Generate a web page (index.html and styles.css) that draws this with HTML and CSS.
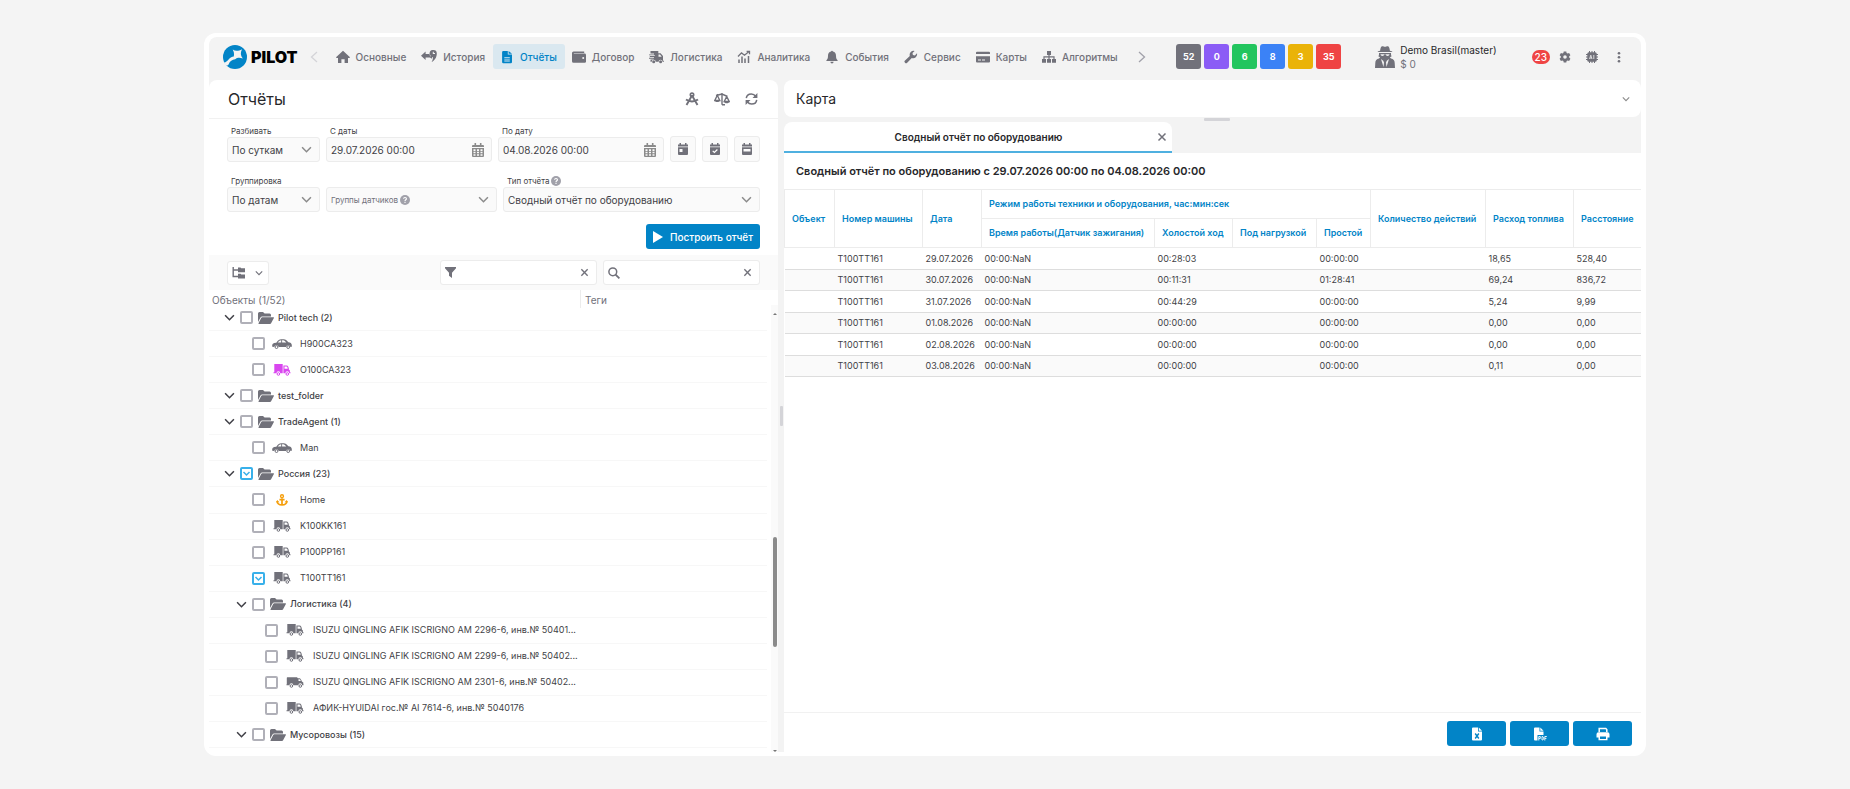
FILE: index.html
```
<!DOCTYPE html>
<html lang="ru">
<head>
<meta charset="utf-8">
<title>Отчёты</title>
<meta name="viewport" content="width=device-width, initial-scale=1">
<link rel="stylesheet" href="styles.css">
</head>
<body>

<svg class="sprite" aria-hidden="true">
  <symbol id="chev" viewBox="0 0 10 10"><path d="M1 3l4 4 4-4" fill="none" stroke="currentColor" stroke-width="1.4"/></symbol>
  <symbol id="close" viewBox="0 0 10 10"><path d="M1.5 1.5l7 7m0-7l-7 7" fill="none" stroke="currentColor" stroke-width="1.5"/></symbol>
  <symbol id="help" viewBox="0 0 12 12"><circle cx="6" cy="6" r="6" fill="#a1a1aa"/><path d="M4.3 4.6C4.4 2.4 7.8 2.6 7.7 4.6 7.6 5.7 6 5.8 6 7.2M6 8.2v1.3" fill="none" stroke="#fff" stroke-width="1.3"/></symbol>
  <symbol id="cal" viewBox="0 0 12 14"><path fill="currentColor" fill-rule="evenodd" d="M2.5 0h1.6v2h3.8V0h1.6v2H11a1 1 0 011 1v1H0V3a1 1 0 011-1h1.5zM0 5h12v8a1 1 0 01-1 1H1a1 1 0 01-1-1zM1.5 6.3v1.6h2V6.3zm3.5 0v1.6h2V6.3zm3.5 0v1.6h2V6.3zM1.5 8.8v1.5h2V8.8zm3.5 0v1.5h2V8.8zm3.5 0v1.5h2V8.8zM1.5 11.2v1.5h2v-1.5zm3.5 0v1.5h2v-1.5zm3.5 0v1.5h2v-1.5z"/></symbol>
  <symbol id="folder" viewBox="0 0 16 12"><path fill="currentColor" d="M0 10.5V1.5A1.5 1.5 0 011.5 0H5l1.600 1.600h5A1.500 1.500 0 0113 3.100v1.300H4.300a2 2 0 00-1.800 1L0 10zM4.300 5.300h11.200c.4 0 .6.400.4.700l-2.800 5.300a1.300 1.300 0 01-1.200.7H.9c-.4 0-.6-.4-.4-.7L3.200 6a1.300 1.300 0 011.100-.7z"/></symbol>
  <symbol id="car" viewBox="0 0 20 10"><path fill="currentColor" fill-rule="evenodd" d="M.3 7.700c-.4-1.800.2-3.100 1.800-3.600l2.200-.4C6.200 1.300 7.400.3 9.200.3h2.600c1.700 0 2.900 1 4.600 3 2 .2 3.300 1 3.400 2.800v1.600l-1.300.3a2.300 2.300 0 00-4.500 0H6.700a2.300 2.300 0 00-4.500 0zM5.700 3.600h3.500V1.200c-1.700 0-2.500.9-3.500 2.400zm4.400-2.400v2.400h4.200c-1-1.500-1.800-2.400-3.200-2.400z"/><circle cx="4.500" cy="8.100" r="1.400" fill="none" stroke="currentColor"/><circle cx="16.200" cy="8.100" r="1.400" fill="none" stroke="currentColor"/></symbol>
  <symbol id="truck" viewBox="0 0 17 12"><path fill="currentColor" fill-rule="evenodd" d="M.8 0h8.400v9.200H6.800a1.900 1.900 0 00-3.800 0H0v-.9h.8zM9.900 1.500h3.200c1.400 0 2.300 1.800 2.300 4.100l1 .9v1.800h.6v.9h-1.300a1.900 1.900 0 00-3.800 0h-2zm1.100 1v2.200h3.200c-.1-1.300-.6-2.200-1.400-2.200z"/><circle cx="4.900" cy="10" r="1.300" fill="none" stroke="currentColor"/><circle cx="13.800" cy="10" r="1.300" fill="none" stroke="currentColor"/></symbol>
  <symbol id="van" viewBox="0 0 17 12"><path fill="currentColor" fill-rule="evenodd" d="M.8 1.200h9c.8 0 1.200.4 1.500 1h1.800c1.300.6 1.900 2 2.300 3.400l1.400.8v1.900h.2v.9h-1.300a1.900 1.900 0 00-3.800 0H6.800a1.900 1.900 0 00-3.800 0H0v-.9h.3V2c0-.4.200-.8.500-.8zM12 3.200v1.900h2.400c-.4-1-.8-1.900-1.400-1.900z"/><circle cx="4.900" cy="10" r="1.300" fill="none" stroke="currentColor"/><circle cx="13.800" cy="10" r="1.300" fill="none" stroke="currentColor"/></symbol>
  <symbol id="anchor" viewBox="0 0 14 14"><path d="M7 5v7.500M4 6.500h6M1.300 8.500c.3 3 2.700 4.300 5.700 4.300s5.400-1.300 5.700-4.300" fill="none" stroke="currentColor" stroke-width="2"/><circle cx="7" cy="2.600" r="1.700" fill="none" stroke="currentColor" stroke-width="1.600"/><path fill="currentColor" d="M0 9.500L1.500 7 4 9.500zm10 0L12.500 7 14 9.500z"/></symbol>
</svg>

<div class="app">
  <header class="topbar">
    <a class="logo" href="#">
      <svg width="24" height="24" viewBox="0 0 24 24"><circle cx="12" cy="12" r="12" fill="#0284c7"/><path fill="#f3f3f3" d="M9.700 4.500c2.600 1.700 5.700 1.700 9.300-.3-1.700 3.600-1.600 6.200.8 9.200-3.300-1-5.500-.9-7.600.8-3 .2-5.300 2-6.400 4.700-.6 1.300-1.600 2-3 1.500L.6 17.800C3.300 17.300 4.600 15.600 6 14c1.400-1.700 3.300-2.700 4.800-2.600.6-2.400.1-4.700-1.100-6.900z"/></svg>
      <span>PILOT</span>
    </a>
    <button class="arrow arrow-off" aria-label="Назад"><svg width="8" height="12" viewBox="0 0 8 12"><path d="M7 1L1.500 6 7 11" fill="none" stroke="currentColor" stroke-width="1.300"/></svg></button>
    <nav class="menu">
      <a href="#"><svg width="14" height="14" viewBox="0 0 14 14"><path fill="currentColor" d="M7 .8l7 6.400-.6.800H12v5H8.600V9.200H5.400V13H2V8H.6L0 7.200z"/></svg>Основные</a>
      <a href="#"><svg width="16" height="14" viewBox="0 0 16 14"><path fill="currentColor" fill-rule="evenodd" d="M0 5.800L4.600 1.600v2.500h4.200c.3 1.600 1.300 2.800 2.600 3.200l-.7 1.500c-.6-1-1.800-1.300-3-1.300H4.600V10zM12.300 0a3.500 3.500 0 013.500 3.600c0 4-2.400 7.400-5.200 8.400 1-1.500 1.500-3.200 1.300-4.900A3.500 3.500 0 0112.300 0zm-.5 1.800v2.100h2.200v-1h-1.200V1.800z"/></svg>История</a>
      <a class="active" href="#"><svg width="14" height="14" viewBox="0 0 14 14"><path fill="currentColor" fill-rule="evenodd" d="M3.300 1h4.500v3.500H12V12a1.200 1.200 0 01-1.200 1.200H3.300A1.200 1.200 0 012.100 12V2.200A1.200 1.200 0 013.300 1zm5.300 0L12 3.800H8.600zM4.300 7v.8h5.500V7zm0 1.800v.8h5.500v-.8zm0 1.800v.8h5.500v-.8z"/></svg>Отчёты</a>
      <a href="#"><svg width="14" height="14" viewBox="0 0 14 14"><path fill="currentColor" fill-rule="evenodd" d="M1.500 1.500h10.700v1.400H1.800v.7h10.800A1.400 1.400 0 0114 5v6.300a1.300 1.300 0 01-1.300 1.400H1.500A1.500 1.500 0 010 11.200V3a1.500 1.500 0 011.500-1.500zm9.700 5.600a1 1 0 100 2 1 1 0 000-2z"/></svg>Договор</a>
      <a href="#"><svg width="15" height="14" viewBox="0 0 15 14"><path fill="currentColor" fill-rule="evenodd" d="M1.500 1h7.800v2.300h2.300L14 6v4.700h1v1h-1.400a2 2 0 00-4 0H6.700a2 2 0 00-4 0H1.500V9.500h3v-.8H0V7.800h5V7H.8v-.9h5v-.8H0v-.9h5v-.8H1.500zm8 3.600v2.100h3.200l-1.700-2.100z"/><circle cx="4.700" cy="11.700" r="1.500" fill="currentColor"/><circle cx="11.600" cy="11.700" r="1.500" fill="currentColor"/></svg>Логистика</a>
      <a href="#"><svg width="14" height="14" viewBox="0 0 14 14"><path fill="none" stroke="currentColor" stroke-width="1.300" d="M1 6.500l3.500-3.600 3 2.300L12 1.500M9.600 1.400h2.900v2.800"/><path stroke="currentColor" stroke-width="1.500" d="M2 13V9.500M5 13V6.500M8 13V8.500M11.500 13V6"/></svg>Аналитика</a>
      <a href="#"><svg width="14" height="14" viewBox="0 0 14 14"><path fill="currentColor" d="M7 .7c.6 0 .9.300.9.900 2.200.5 3.100 2.200 3.100 4.200 0 2.600.7 3.600 1.600 4.400v.9H1.400v-.9C2.300 9.400 3 8.400 3 5.800c0-2 .9-3.700 3.100-4.200 0-.6.3-.9.900-.9zM5.400 11.800h3.200a1.600 1.600 0 01-3.200 0z"/></svg>События</a>
      <a href="#"><svg width="14" height="14" viewBox="0 0 14 14"><path fill="currentColor" d="M13 3.300a4 4 0 01-5.200 4.700l-4.600 4.700a1.500 1.500 0 01-2.200 0 1.500 1.500 0 010-2.200l4.800-4.500A4 4 0 0110.600 1L8.500 3.100l.4 2 2 .4z"/></svg>Сервис</a>
      <a href="#"><svg width="14" height="14" viewBox="0 0 14 14"><path fill="currentColor" fill-rule="evenodd" d="M1 1.700h12a1 1 0 011 1v1.400H0V2.700a1 1 0 011-1zM0 6.200h14v5.300a1 1 0 01-1 1H1a1 1 0 01-1-1zm2 3.400v1h3v-1zm4 0v1h3v-1z"/></svg>Карты</a>
      <a href="#"><svg width="14" height="14" viewBox="0 0 14 14"><path fill="currentColor" d="M5 1h4v4H5zM0 9h4v3.700H0zm5 0h4v3.700H5zm5 0h4v3.700h-4z"/><path d="M7 4v5M2 9V6.900h10V9" fill="none" stroke="currentColor" stroke-width="1.200"/></svg>Алгоритмы</a>
    </nav>
    <button class="arrow" aria-label="Вперёд"><svg width="8" height="12" viewBox="0 0 8 12"><path d="M1 1l5.500 5L1 11" fill="none" stroke="currentColor" stroke-width="1.300"/></svg></button>
    <div class="counters">
      <button class="counter gray">52</button>
      <button class="counter violet">0</button>
      <button class="counter green">6</button>
      <button class="counter blue">8</button>
      <button class="counter yellow">3</button>
      <button class="counter red">35</button>
    </div>
    <div class="user">
      <svg width="20" height="22" viewBox="0 0 20 22"><path fill="currentColor" fill-rule="evenodd" d="M6.500.5c1.500-.8 2 .3 3.500.3s2-1.100 3.500-.3c.8.600 1.200 2.700 1.400 4.300 1.400.3 2.600.7 2.600 1.300H2.500c0-.6 1.200-1 2.600-1.300.2-1.600.6-3.700 1.400-4.300zM4 7h12v1.500l.5 2-1.700.8 1.200 1.200c2.400.6 3.700 2 3.700 4.500L20 22H0l.3-5c0-2.500 1.300-3.900 3.700-4.500l1.200-1.200-1.700-.8.5-2zm1.500 1.200c.2 1.300.8 1.700 1.900 1.700s1.700-.6 1.900-1.300h1.400c.2.700.8 1.300 1.900 1.300s1.700-.4 1.900-1.700zM6 13l2.500 8L9 16.500l-.8-1.700zm8 0l-2.200 1.800-.8 1.700.5 4.500z"/></svg>
      <div>
        <div class="user-name">Demo Brasil(master)</div>
        <div class="user-sum">$ 0</div>
      </div>
    </div>
    <div class="tools">
      <span class="alerts">23</span>
      <button class="icon-btn" aria-label="Настройки"><svg width="12" height="12" viewBox="0 0 12 12"><path fill="currentColor" fill-rule="evenodd" d="M4.700.5h2.600l.3 1.500 1 .6 1.500-.5 1.300 2.200-1.200 1v1.300l1.200 1.100-1.300 2.200-1.500-.5-1 .6-.3 1.500H4.700L4.400 10l-1-.6-1.500.5L.6 7.700l1.200-1.100V5.300l-1.200-1 1.300-2.200 1.500.5 1-.6zM6 4.200a1.800 1.800 0 100 3.600 1.800 1.800 0 000-3.600z"/></svg></button>
      <button class="icon-btn" aria-label="AI"><svg width="12" height="12" viewBox="0 0 12 12"><path stroke="currentColor" stroke-width="1" d="M3.500 0v12M6 0v12M8.500 0v12M0 3.500h12M0 6h12M0 8.500h12"/><rect x="1.300" y="1.300" width="9.400" height="9.400" rx="1.500" fill="currentColor"/><path d="M3.500 8L4.800 4.200 6 8M4 7h1.600M7.800 4v4" stroke="#f3f3f3" stroke-width=".8" fill="none"/></svg></button>
      <button class="icon-btn" aria-label="Меню"><svg width="12" height="12" viewBox="0 0 12 12"><g fill="currentColor"><circle cx="6" cy="2.200" r="1.300"/><circle cx="6" cy="6.200" r="1.300"/><circle cx="6" cy="10.200" r="1.300"/></g></svg></button>
    </div>
  </header>

  <main class="workspace">
    <section class="side">
      <div class="side-head">
        <h1>Отчёты</h1>
        <button class="icon-btn" aria-label="Конструктор"><svg width="14" height="14" viewBox="0 0 14 14"><path fill="none" stroke="currentColor" stroke-width="1.900" d="M7 3.500L1.500 13M7 3.500L12.500 13M1 7.500c3.500 2.600 8.500 2.600 12 0"/><circle cx="7" cy="2.800" r="1.700" fill="none" stroke="currentColor" stroke-width="1.600"/></svg></button>
        <button class="icon-btn" aria-label="Сравнение"><svg width="16" height="14" viewBox="0 0 16 14"><path fill="none" stroke="currentColor" stroke-width="1.400" d="M2 3.500l6-1.500 5.500 2.500M8 1v11.800M8 12.800h3M3.300 3.300L.8 8.500h5zM12.700 4.500l-2.500 5h5z"/><path fill="currentColor" d="M.5 8.300h5.600c-.4 2.400-5.200 2.400-5.600 0zm9.400 1.200h5.600c-.4 2.400-5.200 2.400-5.600 0z"/></svg></button>
        <button class="icon-btn" aria-label="Обновить"><svg width="13" height="14" viewBox="0 0 13 14"><path fill="none" stroke="currentColor" stroke-width="1.500" d="M1.300 6.200C1.600 3.600 3.700 2 6.300 2c1.900 0 3.300.8 4.400 2.300M11.700 7.800c-.3 2.600-2.400 4.200-5 4.200-1.900 0-3.300-.8-4.400-2.300"/><path fill="currentColor" d="M12.400 1v5H7.500zM.6 13V8h4.900z"/></svg></button>
      </div>

      <form class="params" onsubmit="return false;">
        <div class="line">
          <div class="group w-short">
            <label for="split">Разбивать</label>
            <div class="field"><select id="split"><option>По суткам</option></select><svg class="caret"><use href="#chev"/></svg></div>
          </div>
          <div class="group grow">
            <label for="from">С даты</label>
            <div class="field"><input id="from" type="text" value="29.07.2026 00:00"><svg class="cal"><use href="#cal"/></svg></div>
          </div>
          <div class="group grow">
            <label for="to">По дату</label>
            <div class="field"><input id="to" type="text" value="04.08.2026 00:00"><svg class="cal"><use href="#cal"/></svg></div>
          </div>
          <button class="day" aria-label="День"><svg width="10" height="12" viewBox="0 0 10 12"><path fill="currentColor" fill-rule="evenodd" d="M1.500 0H3v1.500h4V0h1.500v1.500H10v2H0v-2h1.500zM0 4.300h10V11a1 1 0 01-1 1H1a1 1 0 01-1-1zM1.500 6v3h3V6z"/></svg></button>
          <button class="day" aria-label="Неделя"><svg width="10" height="12" viewBox="0 0 10 12"><path fill="currentColor" d="M1.500 0H3v1.500h4V0h1.500v1.500H10v2H0v-2h1.500zM0 4.300h10V11a1 1 0 01-1 1H1a1 1 0 01-1-1z"/><path d="M2.700 7.800l1.700 1.700 3-3" fill="none" stroke="#fff" stroke-width="1.200"/></svg></button>
          <button class="day" aria-label="Месяц"><svg width="10" height="12" viewBox="0 0 10 12"><path fill="currentColor" fill-rule="evenodd" d="M1.500 0H3v1.500h4V0h1.500v1.500H10v2H0v-2h1.500zM0 4.300h10V11a1 1 0 01-1 1H1a1 1 0 01-1-1zM1.500 6v2.500h7V6z"/></svg></button>
        </div>
        <div class="line">
          <div class="group w-short">
            <label for="grouping">Группировка</label>
            <div class="field"><select id="grouping"><option>По датам</option></select><svg class="caret"><use href="#chev"/></svg></div>
          </div>
          <div class="group w-sensors">
            <div class="field"><label for="sensors">Группы датчиков</label><svg class="help"><use href="#help"/></svg><select id="sensors"><option></option></select><svg class="caret"><use href="#chev"/></svg></div>
          </div>
          <div class="group grow">
            <label for="type">Тип отчёта <svg class="help"><use href="#help"/></svg></label>
            <div class="field"><select id="type"><option>Сводный отчёт по оборудованию</option></select><svg class="caret"><use href="#chev"/></svg></div>
          </div>
        </div>
        <button class="primary build"><svg width="10" height="12" viewBox="0 0 10 12"><path d="M0 0l10 6-10 6z" fill="currentColor"/></svg>Построить отчёт</button>
      </form>

      <div class="filters">
        <button class="mode" aria-label="Вид дерева"><svg width="13" height="12" viewBox="0 0 13 12"><path d="M1.200 0v9.500H6M1.200 3H6" fill="none" stroke="currentColor" stroke-width="1.400"/><path fill="currentColor" d="M6 .5h2.500l.7.800H13v4H6zM6 6.700h2.500l.7.800H13v4H6z"/></svg><svg class="small"><use href="#chev"/></svg></button>
        <div class="field white"><svg width="11" height="11" viewBox="0 0 11 11"><path d="M0 0h11v1.300L7 5.800V11L4 8.800v-3L0 1.300z" fill="currentColor"/></svg><input type="text" aria-label="Фильтр"><svg class="clear"><use href="#close"/></svg></div>
        <div class="field white"><svg width="12" height="12" viewBox="0 0 12 12"><circle cx="4.800" cy="4.800" r="3.900" fill="none" stroke="currentColor" stroke-width="1.500"/><path d="M7.600 7.600l3.800 3.800" stroke="currentColor" stroke-width="1.800"/></svg><input type="text" aria-label="Поиск"><svg class="clear"><use href="#close"/></svg></div>
      </div>

      <div class="cols"><div>Объекты (1/52)</div><div>Теги</div></div>
      <div class="tree-wrap">
        <ul class="tree">
          <li class="dir l0"><svg class="tw"><use href="#chev"/></svg><input type="checkbox" id="o1"><svg class="fold"><use href="#folder"/></svg><label for="o1">Pilot tech (2)</label></li>
          <li class="l1"><input type="checkbox" id="o2"><svg class="obj"><use href="#car"/></svg><label for="o2">H900CA323</label></li>
          <li class="l1"><input type="checkbox" id="o3"><svg class="obj pink"><use href="#truck"/></svg><label for="o3">O100CA323</label></li>
          <li class="dir l0"><svg class="tw"><use href="#chev"/></svg><input type="checkbox" id="o4"><svg class="fold"><use href="#folder"/></svg><label for="o4">test_folder</label></li>
          <li class="dir l0"><svg class="tw"><use href="#chev"/></svg><input type="checkbox" id="o5"><svg class="fold"><use href="#folder"/></svg><label for="o5">TradeAgent (1)</label></li>
          <li class="l1"><input type="checkbox" id="o6"><svg class="obj"><use href="#car"/></svg><label for="o6">Man</label></li>
          <li class="dir l0"><svg class="tw"><use href="#chev"/></svg><input type="checkbox" id="o7" checked><svg class="fold"><use href="#folder"/></svg><label for="o7">Россия (23)</label></li>
          <li class="l1"><input type="checkbox" id="o8"><svg class="obj orange"><use href="#anchor"/></svg><label for="o8">Home</label></li>
          <li class="l1"><input type="checkbox" id="o9"><svg class="obj"><use href="#truck"/></svg><label for="o9">K100KK161</label></li>
          <li class="l1"><input type="checkbox" id="o10"><svg class="obj"><use href="#truck"/></svg><label for="o10">P100PP161</label></li>
          <li class="l1"><input type="checkbox" id="o11" checked><svg class="obj"><use href="#truck"/></svg><label for="o11">T100TT161</label></li>
          <li class="dir l1"><svg class="tw"><use href="#chev"/></svg><input type="checkbox" id="o12"><svg class="fold"><use href="#folder"/></svg><label for="o12">Логистика (4)</label></li>
          <li class="l2"><input type="checkbox" id="o13"><svg class="obj"><use href="#truck"/></svg><label for="o13">ISUZU QINGLING AFIK ISCRIGNO AM 2296-6, инв.№ 50401...</label></li>
          <li class="l2"><input type="checkbox" id="o14"><svg class="obj"><use href="#truck"/></svg><label for="o14">ISUZU QINGLING AFIK ISCRIGNO AM 2299-6, инв.№ 50402...</label></li>
          <li class="l2"><input type="checkbox" id="o15"><svg class="obj"><use href="#van"/></svg><label for="o15">ISUZU QINGLING AFIK ISCRIGNO AM 2301-6, инв.№ 50402...</label></li>
          <li class="l2"><input type="checkbox" id="o16"><svg class="obj"><use href="#truck"/></svg><label for="o16">АФИК-HYUIDAI гос.№ AI 7614-6, инв.№ 5040176</label></li>
          <li class="dir l1"><svg class="tw"><use href="#chev"/></svg><input type="checkbox" id="o17"><svg class="fold"><use href="#folder"/></svg><label for="o17">Мусоровозы (15)</label></li>
        </ul>
        <div class="scroll"><i class="up"></i><i class="thumb"></i><i class="down"></i></div>
      </div>
    </section>

    <div class="split"><i></i></div>

    <section class="content">
      <div class="map-head"><h2>Карта</h2><svg class="small"><use href="#chev"/></svg></div>
      <div class="tabs">
        <i class="grip"></i>
        <div class="tab"><span>Сводный отчёт по оборудованию</span><button class="icon-btn" aria-label="Закрыть"><svg class="tab-x"><use href="#close"/></svg></button></div>
      </div>
      <div class="report">
        <h3>Сводный отчёт по оборудованию с 29.07.2026 00:00 по 04.08.2026 00:00</h3>
        <table>
          <colgroup><col class="c-obj"><col class="c-num"><col class="c-date"><col class="c-work"><col class="c-idle"><col class="c-load"><col class="c-stop"><col class="c-act"><col class="c-fuel"><col></colgroup>
          <thead>
            <tr>
              <th rowspan="2">Объект</th><th rowspan="2">Номер машины</th><th rowspan="2">Дата</th>
              <th colspan="4">Режим работы техники и оборудования, час:мин:сек</th>
              <th rowspan="2">Количество действий</th><th rowspan="2">Расход топлива</th><th rowspan="2">Расстояние</th>
            </tr>
            <tr><th>Время работы(Датчик зажигания)</th><th>Холостой ход</th><th>Под нагрузкой</th><th>Простой</th></tr>
          </thead>
          <tbody>
            <tr><td></td><td>T100TT161</td><td>29.07.2026</td><td>00:00:NaN</td><td>00:28:03</td><td></td><td>00:00:00</td><td></td><td>18,65</td><td>528,40</td></tr>
            <tr><td></td><td>T100TT161</td><td>30.07.2026</td><td>00:00:NaN</td><td>00:11:31</td><td></td><td>01:28:41</td><td></td><td>69,24</td><td>836,72</td></tr>
            <tr><td></td><td>T100TT161</td><td>31.07.2026</td><td>00:00:NaN</td><td>00:44:29</td><td></td><td>00:00:00</td><td></td><td>5,24</td><td>9,99</td></tr>
            <tr><td></td><td>T100TT161</td><td>01.08.2026</td><td>00:00:NaN</td><td>00:00:00</td><td></td><td>00:00:00</td><td></td><td>0,00</td><td>0,00</td></tr>
            <tr><td></td><td>T100TT161</td><td>02.08.2026</td><td>00:00:NaN</td><td>00:00:00</td><td></td><td>00:00:00</td><td></td><td>0,00</td><td>0,00</td></tr>
            <tr><td></td><td>T100TT161</td><td>03.08.2026</td><td>00:00:NaN</td><td>00:00:00</td><td></td><td>00:00:00</td><td></td><td>0,11</td><td>0,00</td></tr>
          </tbody>
        </table>
      </div>
      <div class="export">
        <button class="primary" aria-label="Excel"><svg width="12" height="14" viewBox="0 0 12 14"><path fill="currentColor" fill-rule="evenodd" d="M2 .5h5V4.500h4V12.500a1 1 0 01-1 1H2a1 1 0 01-1-1v-11a1 1 0 011-1zm5.800 0L11 3.700H7.800z"/><path d="M4.200 6.500l3.600 5m0-5l-3.600 5" stroke="#0284c7" stroke-width="1.400"/></svg></button>
        <button class="primary" aria-label="PDF"><svg width="14" height="14" viewBox="0 0 14 14"><path fill="currentColor" d="M2 .5h4.500V4.500h4V8H4.500v5.500H2a1 1 0 01-1-1v-11a1 1 0 011-1zm5.300 0l3.200 3.200H7.300z"/><path d="M5.800 13.500V9.500h1.500v2H5.800M9 9.500v3.500h.8c.9 0 .9-3.500 0-3.500zM11.800 13.500v-4h2M11.800 11.400h1.600" fill="none" stroke="currentColor" stroke-width=".9"/></svg></button>
        <button class="primary" aria-label="Печать"><svg width="14" height="14" viewBox="0 0 14 14"><path d="M3.200 5V1.500h6.600l1 1V5" fill="none" stroke="currentColor" stroke-width="1.500"/><path fill="currentColor" fill-rule="evenodd" d="M2.500 5.300h9A2 2 0 0113.500 7.300v3.200h-2v2.800h-9v-2.800h-2V7.300a2 2 0 012-2zM4 9.500v2.400h6V9.500z"/></svg></button>
      </div>
    </section>
  </main>
</div>

</body>
</html>
```
FILE: styles.css
```
* {
  box-sizing: border-box;
}
body {
  margin: 0;
  padding: 33px 204px;
  background: #f4f4f4;
  color: #3f3f46;
  font-family: Inter, "Liberation Sans", sans-serif;
  font-size: 10px;
  line-height: 14px;
}
button, input, select {
  font: inherit;
  color: inherit;
}
button {
  cursor: pointer;
}
h1, h2, h3, ul {
  margin: 0;
  padding: 0;
}
svg {
  flex: none;
}
.sprite {
  display: none;
}
.app {
  display: flex;
  flex-direction: column;
  min-height: calc(100vh - 66px);
  padding: 4px 5px;
  background: #fff;
  border-radius: 12px;
}

/* top bar */
.topbar {
  display: flex;
  align-items: center;
  height: 43px;
  padding: 0 16px 4px 14px;
  background: #f3f3f3;
  border-radius: 8px 8px 0 0;
  color: #71717a;
  white-space: nowrap;
}
.logo {
  display: flex;
  align-items: center;
  gap: 4px;
  color: #000;
  font-size: 16px;
  font-weight: 900;
  text-decoration: none;
}
.arrow, .icon-btn {
  display: flex;
  padding: 0;
  border: 0;
  background: none;
  color: #71717a;
}
.arrow {
  color: #a1a1aa;
  margin-left: 12px;
}
.arrow-off {
  color: #d4d4d8;
}
.menu {
  display: flex;
  margin-left: 11px;
}
.menu a {
  display: flex;
  align-items: center;
  gap: 6px;
  height: 25px;
  padding: 0 8px 0 7px;
  border-radius: 3px;
  color: #71717a;
  font-weight: 500;
  text-decoration: none;
}
.menu .active {
  background: #dae8f0;
  color: #0284c7;
}
.counters {
  display: flex;
  gap: 3px;
  margin-left: auto;
}
.counter {
  width: 25px;
  height: 25px;
  padding: 0;
  border: 0;
  border-radius: 3px;
  color: #fff;
  font-size: 9px;
  font-weight: 700;
}
.gray { background: #71717a; }
.violet { background: #8b5cf6; }
.green { background: #22c55e; }
.blue { background: #3b82f6; }
.yellow { background: #eab308; }
.red { background: #ef4444; }
.user {
  display: flex;
  align-items: center;
  gap: 5px;
  margin-left: 34px;
}
.user-name {
  color: #27272a;
}
.tools {
  display: flex;
  align-items: center;
  gap: 15px;
  margin-left: 35px;
}
.alerts {
  margin-right: -6px;
  padding: 0 3px;
  border-radius: 7px;
  background: #ef4444;
  color: #fff;
  font-weight: 500;
}

/* layout */
.workspace {
  display: grid;
  grid-template-columns: 569px 6px minmax(0, 1fr);
  flex: 1;
  background: #f3f3f3;
}
.side {
  display: flex;
  flex-direction: column;
  background: #fff;
  border-radius: 8px 8px 0 0;
}
.side-head {
  display: flex;
  align-items: center;
  gap: 15px;
  height: 39px;
  padding: 0 20px 0 19px;
  border-bottom: 1px solid #f1f1f1;
  color: #71717a;
}
.side-head h1 {
  flex: 1;
  color: #27272a;
  font-size: 16px;
  font-weight: 400;
}

/* report parameters */
.params {
  display: flex;
  flex-direction: column;
  gap: 12px;
  padding: 5px 18px 6px;
}
.line {
  display: flex;
  align-items: flex-end;
  gap: 6px;
}
.group {
  min-width: 0;
}
.group > label {
  display: flex;
  align-items: center;
  gap: 2px;
  height: 13px;
  padding-left: 4px;
  font-size: 8px;
}
.w-short { flex: 0 0 93px; }
.w-sensors { flex: 0 0 171px; }
.grow { flex: 1; }
.field {
  display: flex;
  align-items: center;
  height: 25px;
  padding: 0 7px 0 4px;
  border: 1px solid #ececec;
  border-radius: 3px;
  background: #fafafa;
}
.field label {
  margin-right: 2px;
  color: #71717a;
  font-size: 8px;
}
.field select, .field input {
  flex: 1;
  min-width: 0;
  padding: 0;
  border: 0;
  outline: 0;
  background: none;
  appearance: none;
  color: #3f3f46;
}
.caret {
  width: 11px;
  height: 11px;
  color: #8b8b8b;
}
.cal {
  width: 12px;
  height: 14px;
  color: #8b8b8b;
}
.help {
  width: 10px;
  height: 10px;
}
.day {
  display: flex;
  align-items: center;
  justify-content: center;
  width: 26px;
  height: 26px;
  padding: 0;
  border: 1px solid #ececec;
  border-radius: 3px;
  background: #fafafa;
  color: #71717a;
}
.primary {
  display: flex;
  align-items: center;
  justify-content: center;
  gap: 7px;
  height: 25px;
  border: 0;
  border-radius: 3px;
  background: #0284c7;
  color: #fff;
  font-weight: 500;
}
.build {
  align-self: flex-end;
  padding: 0 7px;
}

/* tree filters */
.filters {
  display: flex;
  align-items: center;
  gap: 6px;
  height: 35px;
  padding: 0 18px;
  background: #fafafa;
  color: #71717a;
}
.mode {
  display: flex;
  align-items: center;
  gap: 10px;
  height: 24px;
  margin-right: auto;
  padding: 0 5px 0 4px;
  border: 1px solid #ececec;
  border-radius: 3px;
  background: #fff;
}
.white {
  width: 157px;
  background: #fff;
}
.small {
  width: 8px;
  height: 8px;
}
.clear {
  width: 9px;
  height: 9px;
}

/* objects tree */
.cols {
  display: flex;
  height: 18px;
  padding-left: 3px;
  color: #71717a;
  line-height: 20px;
}
.cols div:first-child {
  flex: 0 0 368px;
}
.cols div:last-child {
  padding-left: 4px;
  border-left: 1px solid #ececec;
}
.tree-wrap {
  display: flex;
  flex: 1;
  margin-top: -3px;
}
.tree {
  display: flex;
  flex-direction: column;
  flex: 1;
  margin-bottom: 4px;
  font-size: 9px;
  list-style: none;
}
.tree li {
  display: flex;
  align-items: center;
  flex: 1;
  border-bottom: 1px solid #f7f7f7;
}
.l0 { padding-left: 31px; }
.l1 { padding-left: 43px; }
.l2 { padding-left: 56px; }
.tw {
  width: 11px;
  height: 11px;
  margin: 0 5px 0 -16px;
}
.tree input {
  width: 13px;
  height: 13px;
  margin: 0;
  border: 2px solid #b0b0b8;
  border-radius: 2px;
  background: #fff;
  appearance: none;
}
.tree input:checked {
  border-color: #38b0ea;
  background: #fff url("data:image/svg+xml,%3Csvg xmlns='http://www.w3.org/2000/svg' viewBox='0 0 9 9'%3E%3Cpath d='M1.5 3l3 3 3-3' fill='none' stroke='%2338b0ea' stroke-width='1.5'/%3E%3C/svg%3E");
}
.fold {
  width: 16px;
  height: 12px;
  margin: 0 4px 0 5px;
  color: #71717a;
}
.obj {
  width: 20px;
  height: 12px;
  margin: 0 8px 0 7px;
  color: #71717a;
}
.pink { color: #d946ef; }
.orange { color: #f59e0b; }
.dir label {
  font-weight: 500;
}
.scroll {
  display: flex;
  flex-direction: column;
  align-items: center;
  width: 7px;
  margin-left: 4px;
  padding: 8px 0 0;
  background: #fafafa;
}
.up, .down {
  border: 2px solid transparent;
}
.up {
  border-top: 0;
  border-bottom-color: #777;
}
.down {
  border-bottom: 0;
  border-top-color: #777;
}
.thumb {
  width: 4px;
  height: 25%;
  margin: 222px 0 auto;
  border-radius: 2px;
  background: #8b8b8b;
}
.split {
  display: flex;
  align-items: center;
  justify-content: center;
}
.split i {
  width: 3px;
  height: 20px;
  border-radius: 1px;
  background: #d4d4d8;
}

/* report */
.content {
  display: flex;
  flex-direction: column;
}
.map-head {
  display: flex;
  align-items: center;
  justify-content: space-between;
  height: 37px;
  padding: 0 11px 0 12px;
  background: #fff;
  border-radius: 8px;
}
.map-head h2 {
  color: #27272a;
  font-size: 14px;
  font-weight: 400;
}
.map-head svg {
  color: #8b8b8b;
}
.tabs {
  position: relative;
  height: 36px;
  padding-top: 5px;
}
.grip {
  position: absolute;
  top: 1px;
  left: 49%;
  width: 26px;
  height: 3px;
  border-radius: 1px;
  background: #d4d4d8;
}
.tab {
  display: flex;
  align-items: center;
  width: 388px;
  height: 31px;
  padding: 0 5px 0 16px;
  border-bottom: 2px solid #4fb0e0;
  border-radius: 8px 8px 0 0;
  background: #fff;
  color: #27272a;
  font-weight: 600;
}
.tab span {
  flex: 1;
  text-align: center;
}
.tab-x {
  width: 10px;
  height: 10px;
}
.report {
  flex: 1;
  background: #fff;
}
.report h3 {
  padding: 11px 12px;
  color: #27272a;
  font-size: 11px;
  font-weight: 600;
}
table {
  width: 100%;
  table-layout: fixed;
  border-collapse: collapse;
  font-size: 9px;
}
th {
  height: 29px;
  padding: 0 0 0 7px;
  border: 1px solid #ececec;
  border-right: 0;
  color: #0284c7;
  font-weight: 600;
  text-align: left;
  white-space: nowrap;
}
td {
  height: 22px;
  padding: 0 3px;
  border-bottom: 1px solid #ddd;
  white-space: nowrap;
}
tbody tr:nth-child(even) {
  background: #fafafa;
}
tbody tr:nth-child(even) td {
  height: 21px;
}
.c-obj { width: 50px; }
.c-num { width: 88px; }
.c-date { width: 59px; }
.c-work { width: 173px; }
.c-idle { width: 78px; }
.c-load { width: 84px; }
.c-stop { width: 54px; }
.c-act { width: 115px; }
.c-fuel { width: 88px; }
.export {
  display: flex;
  justify-content: flex-end;
  gap: 4px;
  height: 40px;
  padding: 8px 9px 0;
  border-top: 1px solid #f1f1f1;
  background: #fff;
}
.export .primary {
  width: 59px;
}
```
